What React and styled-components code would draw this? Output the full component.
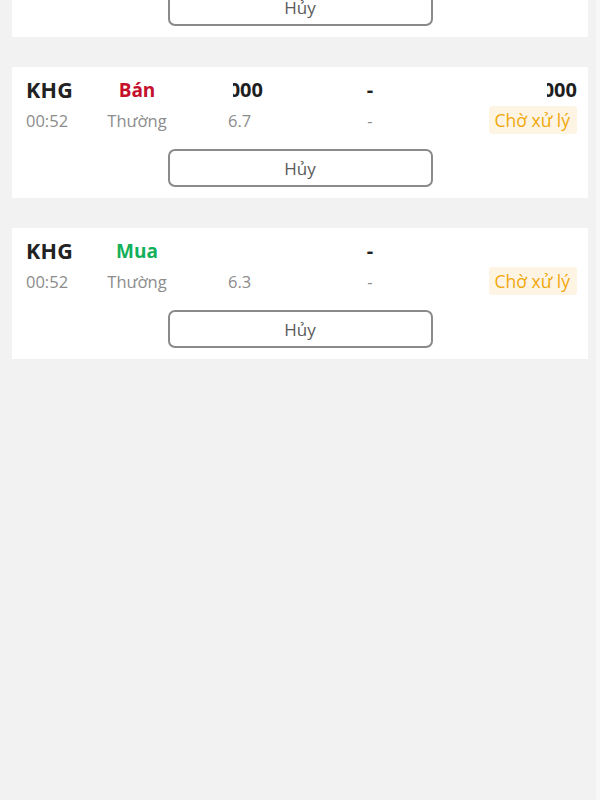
import React from 'react';
import styled, { createGlobalStyle } from 'styled-components';

const GlobalStyle = createGlobalStyle`
  html, body {
    margin: 0;
    padding: 0;
    background: #f2f2f2;
    font-family: 'Open Sans', 'Noto Sans', sans-serif;
    overflow: hidden;
  }
`;

const Page = styled.div`
  height: 800px;
  background: #f2f2f2;
  overflow: hidden;
  border-right: 4px solid #f7f7f7;
  box-sizing: border-box;
`;

const List = styled.div`
  display: flex;
  flex-direction: column;
  gap: 30px;
  margin-top: -94px;
  padding: 0 8px 0 12px;
`;

const Card = styled.div`
  background: #fff;
  height: 131px;
  box-sizing: border-box;
  padding: 7px 11px 11px 14px;
  display: flex;
  flex-direction: column;
`;

const Row = styled.div`
  display: grid;
  grid-template-columns: 70px 82px 142px 100px 1fr;
  align-items: center;
  height: ${(p) => p.$h || 30}px;
`;

const Cell = styled.div`
  padding-left: ${(p) => p.$pad || 0}px;
  white-space: nowrap;
  display: flex;
  justify-content: ${(p) =>
    p.$align === 'center' ? 'center' : p.$align === 'right' ? 'flex-end' : 'flex-start'};
`;

const Symbol = styled.span`
  font-size: 21.5px;
  font-weight: 700;
  color: #222;
  letter-spacing: 0.2px;
`;

const Side = styled.span`
  font-size: 19px;
  font-weight: 700;
  color: ${(p) => (p.$buy ? '#12b05a' : '#c4102c')};
`;

const Strong = styled.span`
  font-size: 20px;
  font-weight: 700;
  color: #1e1e1e;
`;

const Clip = styled.span`
  display: inline-flex;
  justify-content: flex-end;
  overflow: hidden;
  width: ${(p) => p.$w}px;
  margin-left: ${(p) => p.$ml || 0}px;
  font-size: 20px;
  font-weight: 700;
  color: #1e1e1e;
  white-space: nowrap;
`;

const Muted = styled.span`
  font-size: 16.5px;
  color: #8c8c8c;
`;

const Badge = styled.span`
  font-size: 17.5px;
  color: #f0a80c;
  background: #fdf4e4;
  border-radius: 3px;
  height: 28px;
  line-height: 28px;
  padding: 0 7px 0 6px;
`;

const ButtonRow = styled.div`
  display: flex;
  justify-content: center;
  margin-top: 14px;
  padding-right: 3px;
`;

const CancelButton = styled.button`
  width: 265px;
  height: 38px;
  background: #fff;
  border: 2px solid #8a8a8a;
  border-radius: 7px;
  font-family: 'Open Sans', sans-serif;
  font-size: 17px;
  color: #5a5a5a;
  padding: 0;
  cursor: pointer;
`;

const orders = [
  { side: 'Bán', buy: false, price: '6.7', qty: true },
  { side: 'Bán', buy: false, price: '6.7', qty: true },
  { side: 'Mua', buy: true, price: '6.3', qty: false },
];

function OrderCard({ order }) {
  return (
    <Card>
      <Row $h={31}>
        <Cell><Symbol>KHG</Symbol></Cell>
        <Cell $align="center"><Side $buy={order.buy}>{order.side}</Side></Cell>
        <Cell $pad={50}>
          {order.qty && <Clip $w={30} $ml={5}>1.000</Clip>}
        </Cell>
        <Cell $align="center"><Strong>-</Strong></Cell>
        <Cell $align="right">
          {order.qty && <Clip $w={30}>1.000</Clip>}
        </Cell>
      </Row>
      <Row>
        <Cell><Muted>00:52</Muted></Cell>
        <Cell $align="center"><Muted>Thường</Muted></Cell>
        <Cell $pad={50}><Muted>{order.price}</Muted></Cell>
        <Cell $align="center"><Muted>-</Muted></Cell>
        <Cell $align="right"><Badge>Chờ xử lý</Badge></Cell>
      </Row>
      <ButtonRow>
        <CancelButton>Hủy</CancelButton>
      </ButtonRow>
    </Card>
  );
}

export default function App() {
  return (
    <Page>
      <GlobalStyle />
      <List>
        {orders.map((o, i) => (
          <OrderCard key={i} order={o} />
        ))}
      </List>
    </Page>
  );
}
